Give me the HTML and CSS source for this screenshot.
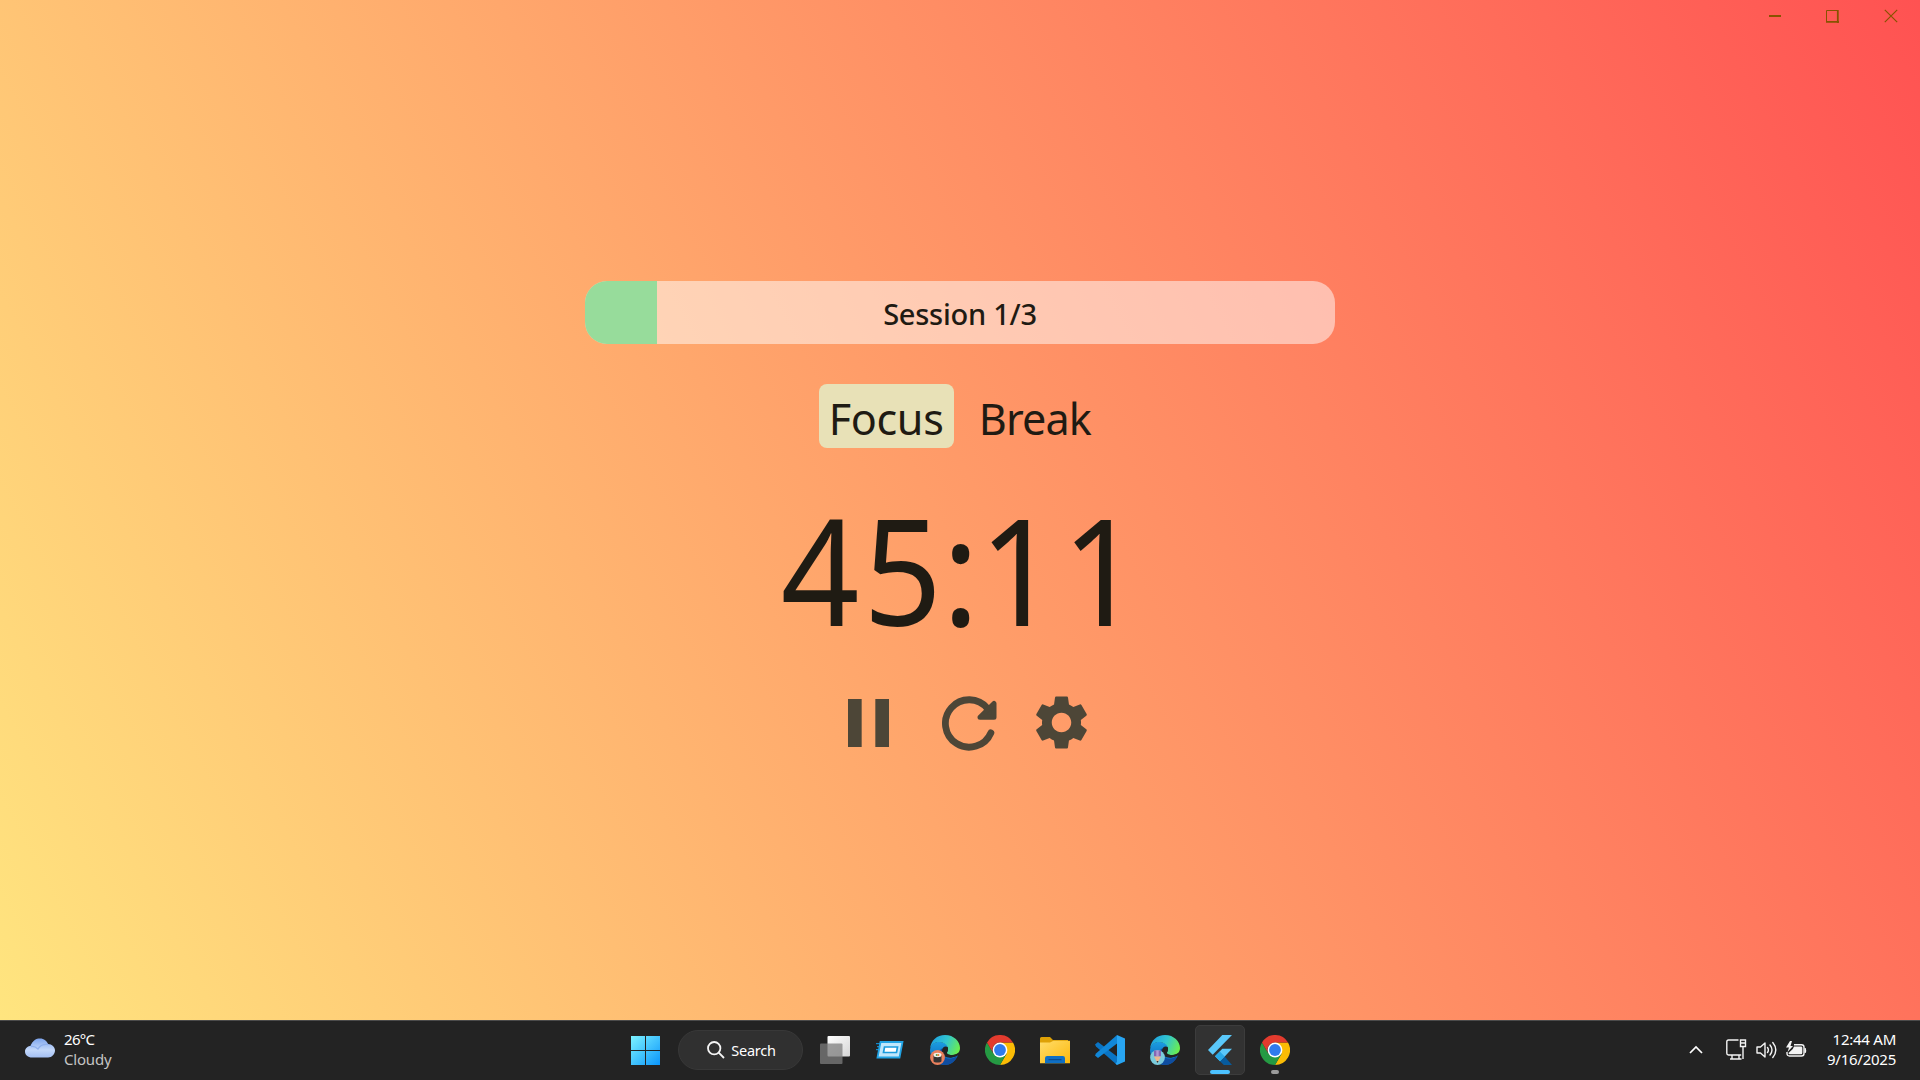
FILE: index.html
```html
<!DOCTYPE html>
<html lang="en">
<head>
<meta charset="utf-8">
<title>Focus Timer</title>
<link rel="stylesheet" href="styles.css">
</head>
<body>
<svg class="defs" width="0" height="0" aria-hidden="true">
  <defs>
    <linearGradient id="win" x1="0" y1="0" x2="1" y2="1"><stop offset="0" stop-color="#7df3ff"/><stop offset="1" stop-color="#0a95fb"/></linearGradient>
    <linearGradient id="cloud" x1="0" y1="0" x2="0" y2="1"><stop offset="0" stop-color="#7fa6ee"/><stop offset=".6" stop-color="#c3d8fa"/><stop offset="1" stop-color="#a3bff3"/></linearGradient>
    <linearGradient id="edgeTop" x1="0" y1=".3" x2="1" y2=".6"><stop offset="0" stop-color="#1c9fe3"/><stop offset=".5" stop-color="#32c6cf"/><stop offset="1" stop-color="#6bee4e"/></linearGradient>
    <linearGradient id="edgeMid" x1="0" y1="0" x2="0" y2="1"><stop offset="0" stop-color="#1b9de2"/><stop offset="1" stop-color="#0c5fb4"/></linearGradient>
    <linearGradient id="folder" x1="0" y1="0" x2="1" y2="1"><stop offset="0" stop-color="#ffdc6a"/><stop offset="1" stop-color="#fdb90c"/></linearGradient>
    <linearGradient id="pane" x1="0" y1="0" x2="1" y2="1"><stop offset="0" stop-color="#fff"/><stop offset="1" stop-color="#d5d5d5"/></linearGradient>
    <symbol id="edge" viewBox="0 0 30 30">
      <path fill="url(#edgeMid)" d="M0 15C1 8 6 6.500 10 7c5 .5 8 3 8 5-3-1.500-6 0-6 4 0 5 5 7.500 10 6.500 2-.4 4-1.500 6-2.500C25 27 20 30 15 30 6 30 0 23 0 15z"/>
      <path fill="#0f4da0" d="M12.500 13c-2 7 3 12 9 10.500 2-.4 4-1.500 6-2.500C25 26.500 20.500 30 15 30 9 30 6 22 9 16z"/>
      <path fill="url(#edgeTop)" d="M0 14C1 5 7 0 15 0c9 0 15 6.500 15 13 0 5-4 7-8 7-4 0-5.500-1.500-5-2.500 3-5-1-10-7-10.500C5.500 6.700 1.500 9 0 14z"/>
      <path fill="#232323" d="M12.300 16c0-3 2.500-4.800 5.500-3.500.5 1.800.2 3.500-.8 5-.5 1 1 2.500 5 2.500 3 0 5-1 6-2l-.3 2.500C25 22 22 22.600 19.500 22c-4-.7-7.200-3-7.200-6z"/>
    </symbol>
    <symbol id="chrome" viewBox="0 0 30 30">
      <path fill="#fbbc05" d="M15 7.500h13A15 15 0 0 1 15 30l6.500-11.250z"/>
      <path fill="#259a43" d="M2 7.500 8.500 18.750l6.500 3.750 1 0L15 30A15 15 0 0 1 2 7.500z"/>
      <path fill="#259a43" d="M15 30l6.500-11.250L8.500 18.750z"/>
      <path fill="#e33b2e" d="M2 7.500a15 15 0 0 1 26 0H15A7.500 7.500 0 0 0 8.500 18.750z"/>
      <circle cx="15" cy="15" r="7.400" fill="#fff"/><circle cx="15" cy="15" r="5.900" fill="#2f7bed"/>
    </symbol>
  </defs>
</svg>

<main class="app">
  <header class="titlebar">
    <svg class="caption" viewBox="0 0 14 14"><path d="M1 7h12" stroke-width="2"/></svg>
    <svg class="caption maximize" viewBox="0 0 14 14"><path d="M1.500 1.500h11v11h-11z" stroke-width="1"/><path d="M1 12.800h13M12.800 1v13" stroke-width="1.800"/></svg>
    <svg class="caption" viewBox="0 0 14 14"><path d="M.8.800l12.400 12.400M13.200.800L.8 13.200" stroke-width="1.200"/></svg>
  </header>
  <section class="timer">
    <div class="progress"><div class="progress-fill" style="width:9.600%"></div><span class="progress-label">Session 1/3</span></div>
    <nav class="modes"><span class="mode active"><span class="focus-text">Focus</span></span><span class="mode"><span class="break-text">Break</span></span></nav>
    <div class="clock">45<span class="colon">:</span>11</div>
    <div class="controls">
      <svg class="pause" viewBox="0 0 12 14"><path d="M0 0h4v14H0zM8 0h4v14H8z"/></svg>
      <svg class="reset" viewBox="0 0 56 56"><path class="arc" d="M45.500 12.500A23.700 23.700 0 1 0 48.900 36.800"/><path class="head" d="M38 21.300 52 7.500v13.800z"/></svg>
      <svg class="gear" viewBox="0 0 24 24"><path d="M19.140 12.940c.04-.3.060-.61.060-.94 0-.32-.02-.64-.07-.94l2.030-1.580c.18-.14.230-.41.120-.61l-1.920-3.320c-.12-.22-.37-.29-.59-.22l-2.390.960c-.5-.38-1.030-.7-1.620-.94L14.400 2.810c-.04-.24-.24-.41-.48-.41h-3.840c-.24 0-.43.170-.47.410L9.250 5.350C8.660 5.590 8.120 5.920 7.630 6.290L5.240 5.330c-.22-.08-.47 0-.59.220L2.740 8.870c-.12.210-.08.470.120.610l2.030 1.580C4.840 11.360 4.800 11.690 4.800 12s.02.640.070.940l-2.030 1.580c-.18.140-.23.410-.12.610l1.920 3.320c.12.220.370.290.590.220l2.390-.96c.5.380 1.030.7 1.620.940l.36 2.540c.05.240.240.410.480.410h3.840c.24 0 .44-.17.470-.41l.36-2.540c.59-.24 1.130-.56 1.620-.94l2.390.960c.22.080.470 0 .59-.22l1.920-3.320c.12-.22.070-.47-.12-.61L19.140 12.940zM12 15.600c-1.980 0-3.600-1.620-3.600-3.600s1.620-3.600 3.600-3.600 3.600 1.620 3.600 3.600-1.620 3.600-3.600 3.600z"/></svg>
    </div>
  </section>
</main>

<footer class="taskbar">
  <div class="weather">
    <svg width="30" height="20" viewBox="0 0 30 20"><path fill="#86abef" d="M5 10A9.500 9 0 0 1 23 7z"/><path fill="url(#cloud)" d="M6 8C8 2 11 .5 15 .5s7 2.500 8 5.500c4 0 7 3 7 6.500s-3 7-7 7H7C3 19.500 0 17 0 13.500S3 8 6 8z"/><path fill="none" stroke="#8fb0ee" stroke-width="1.300" d="M6 8.500c3-.5 5 .5 7 2.500 2-3.500 6-5 10-4.500"/></svg>
    <div class="lines"><span class="temp">26°C</span><span class="sky">Cloudy</span></div>
  </div>
  <div class="pins">
    <div class="pin"><svg width="29" height="29" viewBox="0 0 29 29"><path fill="url(#win)" d="M0 0h14v14H0zM15 0h14v14H15zM0 15h14v14H0zM15 15h14v14H15z"/></svg></div>
    <div class="search"><svg width="18" height="18" viewBox="0 0 18 18" fill="none" stroke="#f4f4f4" stroke-width="1.800"><circle cx="7.200" cy="7.200" r="6.200"/><path d="M11.700 11.700l5.300 5.300"/></svg><span>Search</span></div>
    <div class="pin"><svg width="30" height="28" viewBox="0 0 30 28"><rect x="7.500" width="22.500" height="20.500" rx="1" fill="url(#pane)"/><rect y="7.500" width="22.500" height="20.500" rx="1" fill="#7d7d7d" fill-opacity=".75"/></svg></div>
    <div class="pin"><svg width="28" height="18" viewBox="0 0 28 18"><path fill="#1488c8" d="M0 2h6v1.200H0zM1 5h5v1.200H1zM0 8h5v1.200H0z"/><path d="M4.500 1h22l-3 15.500h-22z" fill="#bfe6fb" stroke="#21a3e4" stroke-width="1.800"/><path d="M8.500 6h13l-1 5.500h-13z" fill="#fff" stroke="#1b9bdd" stroke-width="1.700"/></svg></div>
    <div class="pin"><svg width="30" height="30" viewBox="0 0 30 30"><use href="#edge"/><circle cx="7.500" cy="22.500" r="7.400" fill="#e9805d"/><path fill="#343434" d="M3.500 20h8v6c0 2-8 2-8 0z"/><ellipse cx="7.500" cy="20" rx="4" ry="2.200" fill="#f2f0e8"/><circle cx="6.700" cy="20" r="1" fill="#4aa548"/><circle cx="8.300" cy="20" r="1" fill="#ef7b30"/></svg></div>
    <div class="pin"><svg width="30" height="30"><use href="#chrome"/></svg></div>
    <div class="pin"><svg width="30" height="27" viewBox="0 0 30 27"><path fill="#dea106" d="M0 1.500Q0 0 1.500 0H10l3 3h15v5H0z"/><path fill="url(#folder)" d="M0 5.500h10l3.500-1.800H30v22.500H0z"/><path fill="#0f6fc4" d="M5 26.200v-5Q5 19 7.200 19h15.600q2.200 0 2.200 2.200v5z"/><path stroke="#0a4486" d="M8.500 22.700h13"/></svg></div>
    <div class="pin"><svg width="30" height="30" viewBox="0 0 30 30"><path fill="#0a74c4" d="M0 9.500 3 7l19 14.500V30L1 11.500z"/><path fill="#1187d8" d="M0 20.500 3 23 22 8.500V0L1 18.500z"/><path fill="#28a5f2" d="M22 0l8 3.500v23L22 30l-1.500-1.500L22 27z"/></svg></div>
    <div class="pin"><svg width="30" height="30" viewBox="0 0 30 30"><use href="#edge"/><circle cx="7.500" cy="22.500" r="7.400" fill="#7bcbdc"/><path fill="#8566b4" d="M4 15.500h7v6H4z"/><path fill="#b09ad4" d="M6.300 15.500h2.400v6H6.300z"/><path fill="#eeb78d" d="M4 21.500h7L7.500 28z"/><path fill="#333" d="M6.500 26h2l-1 2z"/></svg></div>
    <div class="pin current"><svg width="24" height="30" viewBox="0 0 24 30"><path fill="#5ac8fa" d="M14.300 0H24L4.700 19.700 0 15zM14.300 13.800H24L16.700 21.400 12 26.200 7 21.200z"/><path fill="#075b9d" d="M12 26.200l4.700-4.800L24 30h-8.200z"/><path fill="#29a9e8" d="M7 21.200l4.800-4.700 4.900 4.900-4.700 4.800z"/></svg><i class="marker wide"></i></div>
    <div class="pin"><svg width="30" height="30"><use href="#chrome"/></svg><i class="marker"></i></div>
  </div>
  <div class="tray">
    <svg class="chevron" width="14" height="9" viewBox="0 0 14 9" fill="none" stroke="#fff" stroke-width="1.700"><path d="M1 8l6-6 6 6"/></svg>
    <svg width="21" height="21" viewBox="0 0 21 21" fill="none" stroke="#f4f4f4" stroke-width="1.400"><path d="M12.500 1H2.500Q.8 1 .8 2.700v11.600Q.8 16 2.500 16h12.700M6 16v3.500M13 16v3.500M4 20h11.500M14.500 1h5v6.500h-5zM14.500 4h5M17 7.500V20"/></svg>
    <svg width="21" height="18" viewBox="0 0 21 18" fill="none" stroke="#f4f4f4" stroke-width="1.400" stroke-linejoin="round" stroke-linecap="round"><path d="M1 6h3.500L9 2v14l-4.500-4H1zM11.500 6.500q1.800 2.500 0 5M14 4q4 5 0 10M16.800 1.500q6 7.500 0 15"/></svg>
    <svg width="21" height="17" viewBox="0 0 21 17"><path fill="none" stroke="#f4f4f4" stroke-width="1.400" d="M8 3.700h7.500Q18 3.700 18 6v6.500q0 2.500-2.500 2.500H3.500Q1 15 1 12.500V11"/><path fill="#f4f4f4" d="M8 5.500h7q1.300 0 1.300 1.300v5q0 1.500-1.300 1.500H4q-1.500 0-1.500-1.300l4.300-4zM18.500 7h1.200q1 2.500 0 5h-1.200zM4 0L0 6.500h3L1.500 11 7 5H4.500L6 0z"/></svg>
    <div class="datetime"><span>12:44 AM</span><span>9/16/2025</span></div>
  </div>
</footer>
</body>
</html>
```
FILE: styles.css
```css
* { box-sizing: border-box; }
body {
  margin: 0;
  width: 1920px;
  height: 1080px;
  overflow: hidden;
  display: flex;
  flex-direction: column;
  font-family: "Noto Sans", "Open Sans", sans-serif;
  color: #1f1b13;
}
svg { display: block; flex: none; }
.defs { position: absolute; }

.app {
  height: 1020px;
  background: linear-gradient(242.02deg, #ff5252, #ffe57f);
}
.titlebar {
  height: 32px;
  display: flex;
  justify-content: flex-end;
  align-items: center;
  gap: 44px;
  padding-right: 22px;
}
.caption { width: 14px; height: 14px; fill: none; stroke: #885300; }
.maximize { margin: 0 1px 0 -1px; }

.timer { display: flex; flex-direction: column; align-items: center; padding-top: 249px; }
.progress {
  display: grid;
  width: 750px;
  height: 63px;
  border-radius: 22px;
  overflow: hidden;
  background: rgba(255, 255, 255, .5);
}
.progress-fill { grid-area: 1 / 1; background: #97dc9b; }
.progress-label {
  grid-area: 1 / 1;
  place-self: center;
  padding-top: 3px;
  font-size: 29px;
  font-weight: 500;
  line-height: 40px;
  letter-spacing: -.25px;
}
.modes { display: flex; gap: 14px; height: 64px; margin: 39.500px 0 0 2px; }
.mode {
  width: 135px;
  display: flex;
  justify-content: center;
  align-items: center;
  border-radius: 8px;
  padding-top: 4px;
  font-size: 44.500px;
  line-height: 56px;
}
.active { background: #e8e1b7; }
.focus-text, .break-text { transform: scaleX(.97); }
.focus-text { letter-spacing: -.4px; }
.break-text { letter-spacing: -.9px; margin-right: 2px; }
.clock {
  height: 200px;
  margin: 21px 0 0 5px;
  font-size: 148px;
  line-height: 200px;
  letter-spacing: 4.200px;
  transform: scaleX(.93);
}
.colon { margin: 0 -4px 0 -4px; }
.controls { display: flex; align-items: center; margin: 22.500px 0 0 14px; height: 64px; fill: #4d4637; }
.pause { width: 41px; height: 48px; }
.reset { width: 56px; height: 56px; margin: 1px 0 0 53px; }
.arc { fill: none; stroke: #4d4637; stroke-width: 6.800; stroke-linecap: round; }
.head { stroke: #4d4637; stroke-width: 5; stroke-linejoin: round; }
.gear { width: 65px; height: 65px; margin: -1px -7px 0 31px; }

.taskbar {
  height: 60px;
  display: grid;
  grid-template-columns: 1fr auto 1fr;
  align-items: center;
  padding-bottom: 1px;
  background: #232323;
  border-top: 1px solid #4b4b4b;
  color: #fff;
  font-size: 15px;
  line-height: 20px;
}
.weather { display: flex; align-items: center; gap: 9px; padding-left: 25px; }
.weather svg { margin-bottom: 5px; }
.lines, .datetime { display: flex; flex-direction: column; padding-bottom: 3px; }
.temp { letter-spacing: -.7px; }
.sky { color: #c4c4c4; letter-spacing: -.2px; }
.pins { display: flex; align-items: center; gap: 5px; }
.pin {
  position: relative;
  width: 50px;
  height: 50px;
  display: flex;
  align-items: center;
  justify-content: center;
  border-radius: 5px;
}
.current { background: #323232; border: 1px solid #3c3c3c; }
.search {
  width: 125px;
  height: 40px;
  margin: 0 2px 0 3px;
  padding: 0 0 0 2px;
  display: flex;
  align-items: center;
  justify-content: center;
  gap: 6px;
  border-radius: 20px;
  background: #303030;
  border: 1px solid #383838;
  font-size: 14.500px;
  letter-spacing: -.2px;
}
.marker {
  position: absolute;
  bottom: 1px;
  left: 21px;
  width: 8px;
  height: 4px;
  border-radius: 2px;
  background: #9b9b9b;
}
.wide { left: 14px; bottom: 0; width: 20px; background: #4cc2ff; }
.tray { display: flex; align-items: center; justify-content: flex-end; gap: 9px; padding-right: 24px; }
.tray > svg { margin-bottom: 1px; }
.tray > .chevron { margin-right: 14px; }
.datetime { width: 80px; align-items: flex-end; letter-spacing: -.25px; }
```
